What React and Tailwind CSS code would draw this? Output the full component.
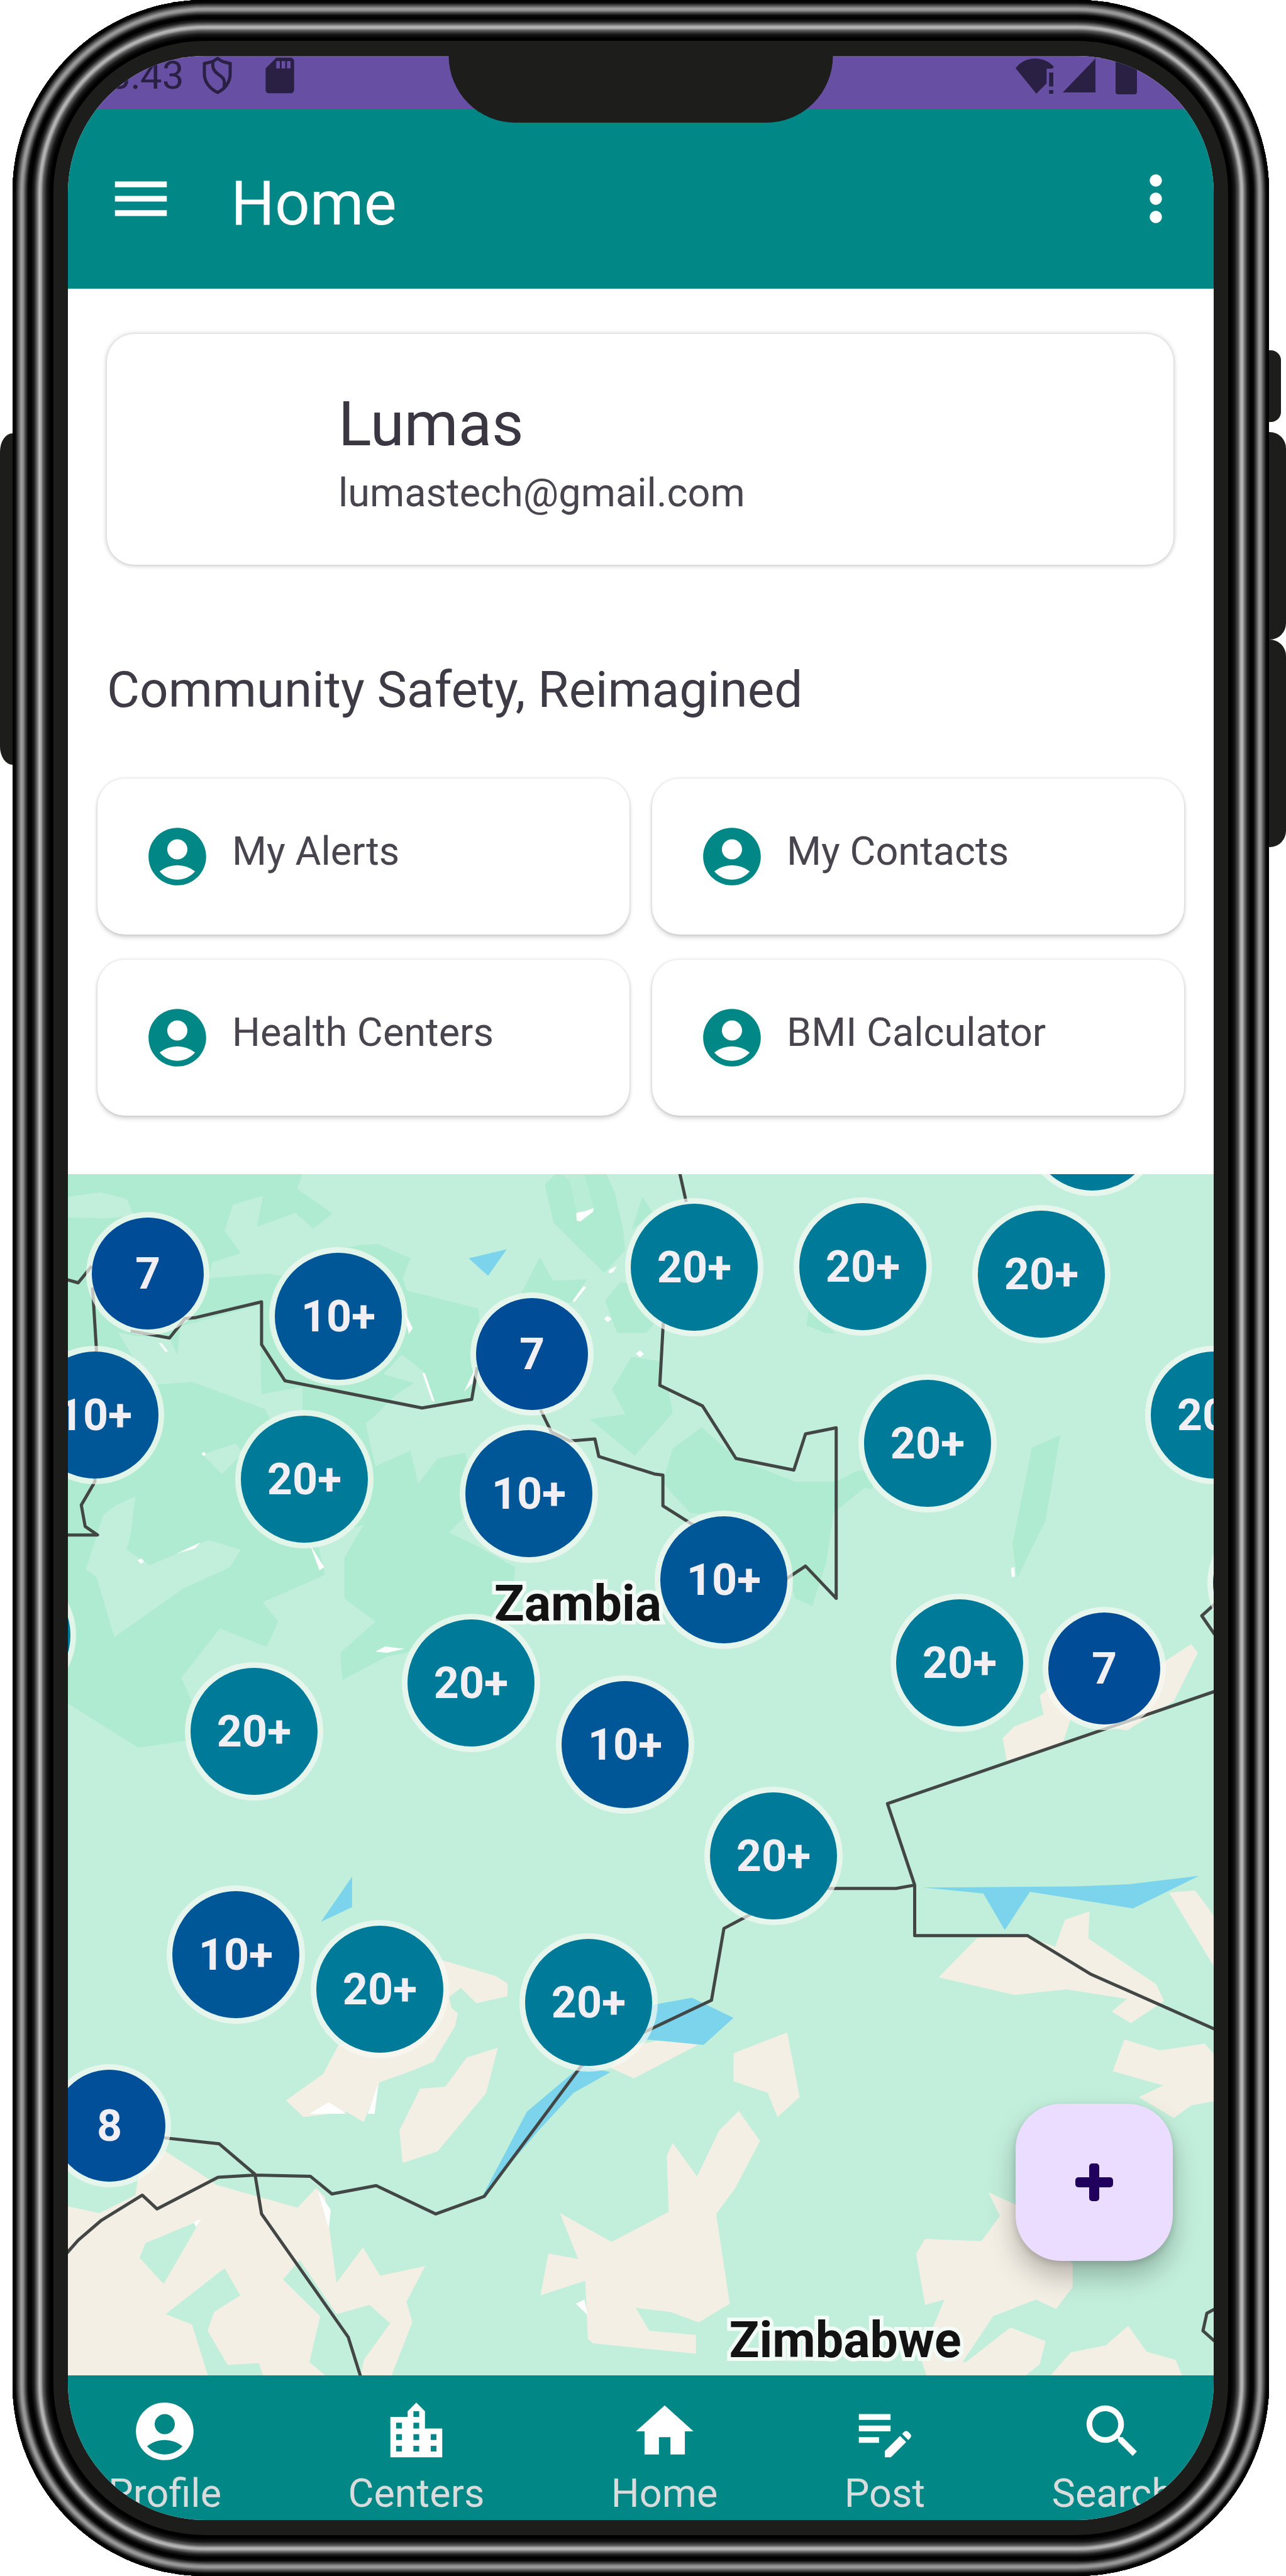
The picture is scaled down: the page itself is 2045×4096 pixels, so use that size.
import React from "react";
import {
  MdAccountCircle,
  MdEditNote,
  MdHome,
  MdLocationCity,
  MdMenu,
  MdMoreVert,
  MdSdCard,
  MdSearch,
} from "react-icons/md";

// Grey level across the metal frame, as [distance from outer edge, level].
const FRAME_STOPS = [
  [0, 0],
  [4, 8],
  [9, 90],
  [13, 155],
  [16, 145],
  [20, 70],
  [24, 8],
  [29, 0],
  [34, 35],
  [39, 120],
  [42, 186],
  [45, 165],
  [48, 90],
  [54, 24],
  [60, 0],
  [65, 0],
];

function frameShadow() {
  const rings = [];
  for (let d = 0; d < 65; d++) {
    const i = FRAME_STOPS.findIndex(([at]) => at > d);
    const [a, va] = FRAME_STOPS[i - 1];
    const [b, vb] = FRAME_STOPS[i];
    const v = Math.round(va + ((vb - va) * (d - a)) / (b - a));
    rings.push(`inset 0 0 0 ${d + 1}px rgb(${v},${v},${v})`);
  }
  return rings.join(",");
}

const MAP_W = 1822;
const MAP_H = 1910;

const PINS = [
  [127, 158, "7"],
  [430, 226, "10+"],
  [738, 286, "7"],
  [43, 383, "10+"],
  [376, 485, "20+"],
  [733, 508, "10+"],
  [641, 809, "20+"],
  [296, 886, "20+"],
  [886, 907, "10+"],
  [-97, 733, "20+"],
  [996, 148, "20+"],
  [1264, 147, "20+"],
  [1548, 159, "20+"],
  [1629, -75, "20+"],
  [1367, 428, "20+"],
  [1823, 383, "20+"],
  [1043, 645, "10+"],
  [1418, 777, "20+"],
  [1648, 786, "7"],
  [1922, 650, "10+"],
  [267, 1241, "10+"],
  [496, 1296, "20+"],
  [828, 1317, "20+"],
  [66, 1513, "8"],
  [1122, 1084, "20+"],
];

const PIN_STYLE = {
  "7": "size-[178px] bg-[#004c97]",
  "8": "size-[178px] bg-[#004f98]",
  "10+": "size-[202px] bg-[#005797]",
  "20+": "size-[202px] bg-[#007a99]",
};

const place = (x, y) => ({ left: `${(x / MAP_W) * 100}%`, top: `${(y / MAP_H) * 100}%` });

function Pin({ x, y, label }) {
  return (
    <button
      type="button"
      style={place(x, y)}
      className={`absolute flex -translate-x-1/2 -translate-y-1/2 items-center justify-center rounded-full text-[70px] leading-none font-bold text-[#f1eff3] ring-[9px] ring-[#f6faf3]/70 ${PIN_STYLE[label]}`}
    >
      {label}
    </button>
  );
}

function CountryLabel({ x, y, children }) {
  return (
    <span
      style={place(x, y)}
      className="absolute -translate-x-1/2 -translate-y-1/2 text-[79px] leading-none font-bold text-[#131314] [paint-order:stroke_fill] [-webkit-text-stroke:12px_#f2fbf6]"
    >
      {children}
    </span>
  );
}

function MapTerrain() {
  return (
    <svg
      viewBox="108 1866 1822 1910"
      preserveAspectRatio="xMidYMid slice"
      className="absolute inset-0 h-full w-full"
      aria-hidden="true"
    >
      <rect x="108" y="1866" width="1822" height="1910" fill="#c2efdb" />

      {/* north-west */}
      <g transform="translate(71.8 1829.9) scale(.61784)">
        <g fill="#afebd0">
          <path d="M50 50H665L649 96 740 160 690 199 644 158 545 194 561 114 483 137 462 205 504 262 431 285 420 326 571 314 640 325 760 250 810 241 857 238 941 275 920 326 931 358 1115 404 1130 560 1098 638 1001 648 972 565 918 523 871 573 949 596 902 627 871 658 856 674 825 700 850 810 940 770 960 855 1010 790 1080 775 1120 900 1040 980 1120 1020 1210 1070 1205 1120 1160 1200 1090 1200 930 1290 880 1300 765 1360 760 1290 850 1210 770 1150V1045L820 960 700 1000 720 1090 560 1160 600 1210 570 1275 450 1228 350 1355 380 1420 370 1515 240 1535 50 1415Z" />
          <path d="M1286 85 1322 50H1441L1467 109 1488 202 1493 254 1439 313 1309 184Z" />
          <path d="M1273 272 1307 332 1395 329 1353 389 1218 380Z" />
          <path d="M1480 337 1441 384 1472 467H1548L1570 440 1510 340Z" />
          <path d="M1537 117 1566 161 1509 202Z" />
          <path d="M1509 529 1581 539 1579 604 1605 617 1615 674 1517 783 1402 689 1493 676 1459 612Z" />
        </g>
        <g fill="#c2efdb">
          <path d="M50 118 140 105 210 122 228 165 160 172 50 170Z" />
          <path d="M1322 50 1351 78 1369 160 1413 150 1390 67 1380 50H1330Z" opacity=".6" />
          <path d="M188 466 235 475 320 480 340 524 348 450 553 395 556 625 662 606V690H580L566 663 379 593 270 601Z" />
          <path d="M232 888 220 985 210 1025 270 1065 420 1000 504 1025 475 1070 355 1125 178 1250 132 1095 105 1075 150 935 180 912Z" />
          <path d="M405 780 490 752 510 775 455 830Z" />
        </g>
        <path fill="#7bd4ec" d="M1090 275 1188 252 1140 320Z" />
        <g fill="#fff">
          <path d="M1367 158 1388 154 1412 146 1410 155 1378 180 1368 178Z" />
          <path d="M1450 306 1472 294 1462 310 1452 314Z" />
          <path d="M1438 430 1448 423 1458 431 1448 439Z" />
          <path d="M1520 520 1531 512 1541 521 1531 530Z" />
          <path d="M922 405 946 455 936 470Z" />
          <path d="M238 1052 248 1047 255 1056 246 1061Z" />
          <path d="M338 1035 400 1006 385 1022Z" />
          <path d="M682 1012 718 1070 706 1078Z" />
          <path d="M850 1287 875 1274 925 1280 880 1290Z" />
          <path d="M402 778 409 773 414 779 408 784Z" />
          <path d="M970 568 978 572 1003 645 995 640Z" />
          <path d="M1386 346 1392 350 1362 388 1358 384Z" />
          <path d="M1078 618 1106 560 1100 596Z" />
          <path d="M292 492 300 494 316 514 310 516Z" />
        </g>
      </g>

      {/* north-east */}
      <g transform="translate(1004.6 1829.9) scale(.61784)">
        <g fill="#afebd0">
          <path d="M180 710 105 765 80 850 95 870 150 930 240 940 400 1060 420 1150 465 1170 500 1060 520 930 600 865 620 870V820L580 822 525 850H420L270 790Z" />
          <path d="M1030 762 1103 730 1065 950 992 1098 980 1010Z" />
          <path d="M455 410 525 468 500 468 450 448Z" />
        </g>
        <path
          fill="#f4efe5"
          d="M1440 1268 1457 1290 1395 1415 1275 1490 1215 1480 1130 1460 1110 1520 965 1568 955 1510 985 1480 1060 1450 1050 1400 1090 1370 1360 1320Z"
        />
        <path fill="#fff" d="M976 1072 985 1070 986 1094 978 1096Z" />
      </g>

      {/* south-west */}
      <g transform="translate(71.8 2762.8) scale(.61784 .6636)">
        <g fill="#f4efe5">
          <path d="M1015 530 1160 570 1190 588V618L1110 635 1070 598 1040 620 1045 645 1062 660 1055 690 1000 775 935 800 860 825 820 920 775 895 665 908 620 868 715 805 755 735 900 700Z" />
          <path d="M1165 742 1135 850 1010 990 920 1018 912 940 965 840 1030 835 1085 765Z" />
          <path d="M50 1120 140 1138 232 1095 240 1050 310 990 410 1050 440 1070 650 1125 695 1075 720 1100 735 1200 750 1305 818 1220 862 1288 978 1265 930 1350 945 1400 890 1530H50Z" />
          <path d="M1325 1138 1458 1207 1605 1135 1600 1000 1615 970 1678 1050 1735 940 1785 893 1840 965 1775 1080 1727 1140 1762 1355 1682 1400 1610 1375 1520 1365 1555 1420 1675 1430V1475L1410 1450 1397 1440 1390 1300 1275 1335 1295 1235 1372 1248Z" />
          <path d="M1455 790 1515 815 1680 735 1600 720 1500 740Z" />
        </g>
        <g fill="#c2efdb">
          <path d="M258 1210 400 1155 305 1308 243 1245Z" />
          <path d="M462 1270 502 1335 435 1375 418 1420 470 1502 550 1497 562 1530H420L378 1405 310 1380Z" />
          <path d="M655 1250 612 1297 708 1385 680 1495 725 1530H812L820 1490 888 1402 835 1358 750 1380Z" />
          <path d="M440 1070 540 1048 683 1052 700 1075 650 1125Z" />
        </g>
        <g fill="#fff">
          <path d="M680 900 730 872 775 900Z" />
          <path d="M858 826 830 900H848Z" />
          <path d="M702 1085 735 1130 730 1175Z" />
          <path d="M382 1160 402 1152 388 1172Z" />
          <path d="M1366 1355 1388 1345 1396 1382Z" />
        </g>
        <g fill="#7bd4ec">
          <path d="M790 332V405L710 440Z" />
          <path d="M1125 1098 1240 895 1380 785 1455 800 1360 850 1270 940Z" />
        </g>
      </g>

      {/* south-east */}
      <g transform="translate(1004.6 2762.8) scale(.61784 .6636)">
        <g fill="#f4efe5">
          <path d="M955 0H1110L965 50Z" />
          <path d="M400 705 432 860 375 908 350 850 262 822V755Z" />
          <path d="M790 573 890 478 1018 475 1090 500 1115 435 1178 415 1175 480 1350 590 1370 630 1285 683 1235 655 1275 625 1120 602 985 615Z" />
          <path d="M1383 370 1450 365 1510 440V565Z" />
          <path d="M1268 722 1360 748 1475 732 1510 770V868L1440 880 1395 910 1305 860 1368 832 1238 798Z" />
          <path d="M918 1088 1040 1140 1135 1260V1315L1092 1368 1040 1345 930 1385 850 1497 760 1530 745 1480 805 1345 755 1358 732 1235 755 1200 900 1205 948 1145Z" />
          <path d="M975 1412 1065 1445 1050 1500 1010 1530H760L745 1490 860 1495Z" />
          <path d="M1278 1408 1325 1470 1400 1490 1418 1530H1075L1130 1472 1220 1455Z" />
        </g>
        <g fill="#7bd4ec">
          <path d="M750 358 1140 355 1280 350 1460 330 1290 408 1025 368 960 460 905 372Z" />
          <path d="M20 645 155 622 262 670 185 735 40 722 0 740Z" />
        </g>
      </g>

      {/* country borders */}
      <g fill="none" stroke="#424645" strokeWidth="5" strokeLinejoin="round">
        <path
          vectorEffect="non-scaling-stroke"
          transform="translate(71.8 1829.9) scale(.61784)"
          d="M50 328 85 338 120 295M122 350 132 510 128 850 93 910 103 965 135 987H50M220 462 320 480 360 430 385 428 557 387V497L617 590 970 660 1098 638 1112 555M1275 665 1303 722 1350 745 1415 740 1425 785 1568 830 1590 833V912L1690 975M1632 50 1650 130M1591 440 1582 602 1692 655 1778 790 1927 820 1957 727 2036 711V1150L1957 1067 1900 1105M3010 1165 2977 1195 3010 1243"
        />
        <path
          vectorEffect="non-scaling-stroke"
          transform="translate(71.8 2762.8) scale(.61784 .6636)"
          d="M50 1240 85 1203 145 1155 250 1095 288 1128 445 1052 540 1047 683 1050 738 1092 852 1072 1005 1140 1130 1098 1380 785 1540 705 1715 628 1747 456 1820 420M1990 360H2190L2238 352 2168 157 3010 -112M2238 352V473H2528L2690 565 3010 697M300 957 448 972 540 1045 557 1140 780 1435 812 1530M3010 1368 2990 1378 2980 1420 3010 1445"
        />
      </g>
    </svg>
  );
}

function ShieldIcon() {
  return (
    <svg viewBox="0 0 50 60" className="h-[60px] w-[50px]" fill="none" stroke="#2a2044" strokeWidth="5" aria-hidden="true">
      <path d="M25 3 33 8 45 11V28C45 41 36 52 25 57 14 52 4 41 4 28V11L17 8Z" />
      <path d="M18 7C16 18 19 23 26 28S38 36 35 48" />
    </svg>
  );
}

function WifiAlertIcon() {
  return (
    <svg viewBox="0 0 64 60" className="h-[58px] w-[64px]" fill="#2a2044" aria-hidden="true">
      <path d="M0 18C8 7 20 2 32 2S56 7 63 16L60 19H51V43L34 60Z" />
      <path d="M55 25H62V48H55ZM55 54H62V60H55Z" />
    </svg>
  );
}

function StatusBar() {
  return (
    <div className="flex h-[84px] items-center justify-between bg-[#6750a4] pr-[122px] pb-[22px] pl-[65px]">
      <div className="flex items-center">
        <span className="text-[62px] leading-none text-[#2a2044]">3:43</span>
        <span className="ml-7 flex items-center gap-10">
          <ShieldIcon />
          <MdSdCard className="size-[68px] text-[#2a2044]" />
        </span>
      </div>
      <div className="flex items-center">
        <WifiAlertIcon />
        <svg viewBox="0 0 52 54" className="ml-3 h-[54px] w-[52px]" fill="#2a2044" aria-hidden="true">
          <path d="M52 0V54H0Z" />
        </svg>
        <svg viewBox="0 0 34 60" className="ml-8 h-[60px] w-[34px]" fill="#2a2044" aria-hidden="true">
          <path d="M10 0H24V6H30Q34 6 34 10V56Q34 60 30 60H4Q0 60 0 56V10Q0 6 4 6H10Z" />
        </svg>
      </div>
    </div>
  );
}

function AppBar() {
  return (
    <header className="flex h-[286px] items-center bg-[#008786] pr-[34px] pl-[61px] text-white">
      <button type="button" aria-label="Open menu">
        <MdMenu className="size-[110px]" />
      </button>
      <h1 className="ml-[88px] flex-1 pt-4 text-[98px] leading-none">Home</h1>
      <button type="button" aria-label="More options">
        <MdMoreVert className="size-[116px]" />
      </button>
    </header>
  );
}

const SHORTCUTS = ["My Alerts", "My Contacts", "Health Centers", "BMI Calculator"];

function Shortcut({ label }) {
  return (
    <button
      type="button"
      className="flex h-[248px] items-center gap-8 rounded-[44px] bg-white pl-[72px] text-left shadow-[0_0_5px_rgba(0,0,0,0.16),0_5px_7px_rgba(0,0,0,0.15)]"
    >
      <MdAccountCircle className="size-[110px] shrink-0 text-[#008786]" />
      <span className="pb-4 text-[63px] leading-[72px] text-[#49454f]">{label}</span>
    </button>
  );
}

const TABS = [
  ["Profile", MdAccountCircle],
  ["Centers", MdLocationCity],
  ["Home", MdHome],
  ["Post", MdEditNote],
  ["Search", MdSearch],
];

function BottomNav() {
  return (
    <nav className="flex justify-between bg-[#008786] px-16 pt-[34px] pb-1.5">
      {TABS.map(([label, Icon]) => (
        <button type="button" key={label} className="flex flex-col items-center gap-2">
          <Icon className="size-[110px] text-white" />
          <span className="text-[63px] leading-[72px] text-[#d9dcdd]">{label}</span>
        </button>
      ))}
    </nav>
  );
}

export default function App() {
  return (
    <div className="flex w-full bg-white font-[Roboto,sans-serif]">
      <div className="w-5 shrink-0 pt-[689px]">
        <div className="h-[527px] bg-[#1d1d1b] [border-radius:20px_0_0_20px/29px_0_0_29px]" />
      </div>

      <div
        className="min-w-0 flex-1 rounded-[306px] bg-[#1d1d1b] px-[88px] py-[89px]"
        style={{ boxShadow: frameShadow() }}
      >
        <div className="relative overflow-hidden rounded-[218px] bg-white">
          <StatusBar />
          <AppBar />

          <main>
            <section className="pt-[72px] pb-[91px]">
              <div className="mr-16 ml-[62px] rounded-[44px] bg-white pt-[87px] pb-[62px] pl-[368px] shadow-[0_0_8px_rgba(0,0,0,0.2),0_2px_6px_rgba(0,0,0,0.1)]">
                <p className="text-[98px] leading-[114px] text-[#3a3642]">Lumas</p>
                <p className="text-[63px] leading-[104px] text-[#49454f]">lumastech@gmail.com</p>
              </div>
              <h2 className="mt-[154px] mb-[96px] px-[62px] text-[80px] leading-[90px] text-[#3f3b46]">
                Community Safety, Reimagined
              </h2>
              <div className="mx-[47px] grid grid-cols-2 gap-x-9 gap-y-10 pb-0.5">
                {SHORTCUTS.map((label) => (
                  <Shortcut key={label} label={label} />
                ))}
              </div>
            </section>

            <section aria-label="Map" className="relative h-[1910px] overflow-hidden">
              <MapTerrain />
              <CountryLabel x={811} y={683}>
                Zambia
              </CountryLabel>
              <CountryLabel x={1236} y={1854}>
                Zimbabwe
              </CountryLabel>
              {PINS.map(([x, y, label]) => (
                <Pin key={`${x},${y}`} x={x} y={y} label={label} />
              ))}
              <button
                type="button"
                aria-label="Add"
                className="absolute right-[65px] bottom-[182px] flex size-[250px] items-center justify-center rounded-[72px] bg-[#eaddff] shadow-[0_24px_44px_rgba(0,0,0,0.26),0_4px_12px_rgba(0,0,0,0.14)]"
              >
                <svg viewBox="0 0 60 60" className="size-[60px]" fill="#21005d" aria-hidden="true">
                  <rect x="0" y="22" width="60" height="16" rx="5" />
                  <rect x="22" y="0" width="16" height="60" rx="5" />
                </svg>
              </button>
            </section>
          </main>

          <BottomNav />

          <div className="absolute top-0 left-1/2 h-[106px] w-[611px] -translate-x-1/2 rounded-b-[108px] bg-[#1d1d1b]" />
        </div>
      </div>

      <div className="w-[27px] shrink-0 pt-[557px]">
        <div className="mr-2 h-[114px] rounded-r-2xl bg-[#1d1d1b]" />
        <div className="mt-4 h-[330px] rounded-r-[26px] bg-[#1d1d1b]" />
        <div className="h-[330px] rounded-r-[26px] bg-[#1d1d1b]" />
      </div>
    </div>
  );
}
